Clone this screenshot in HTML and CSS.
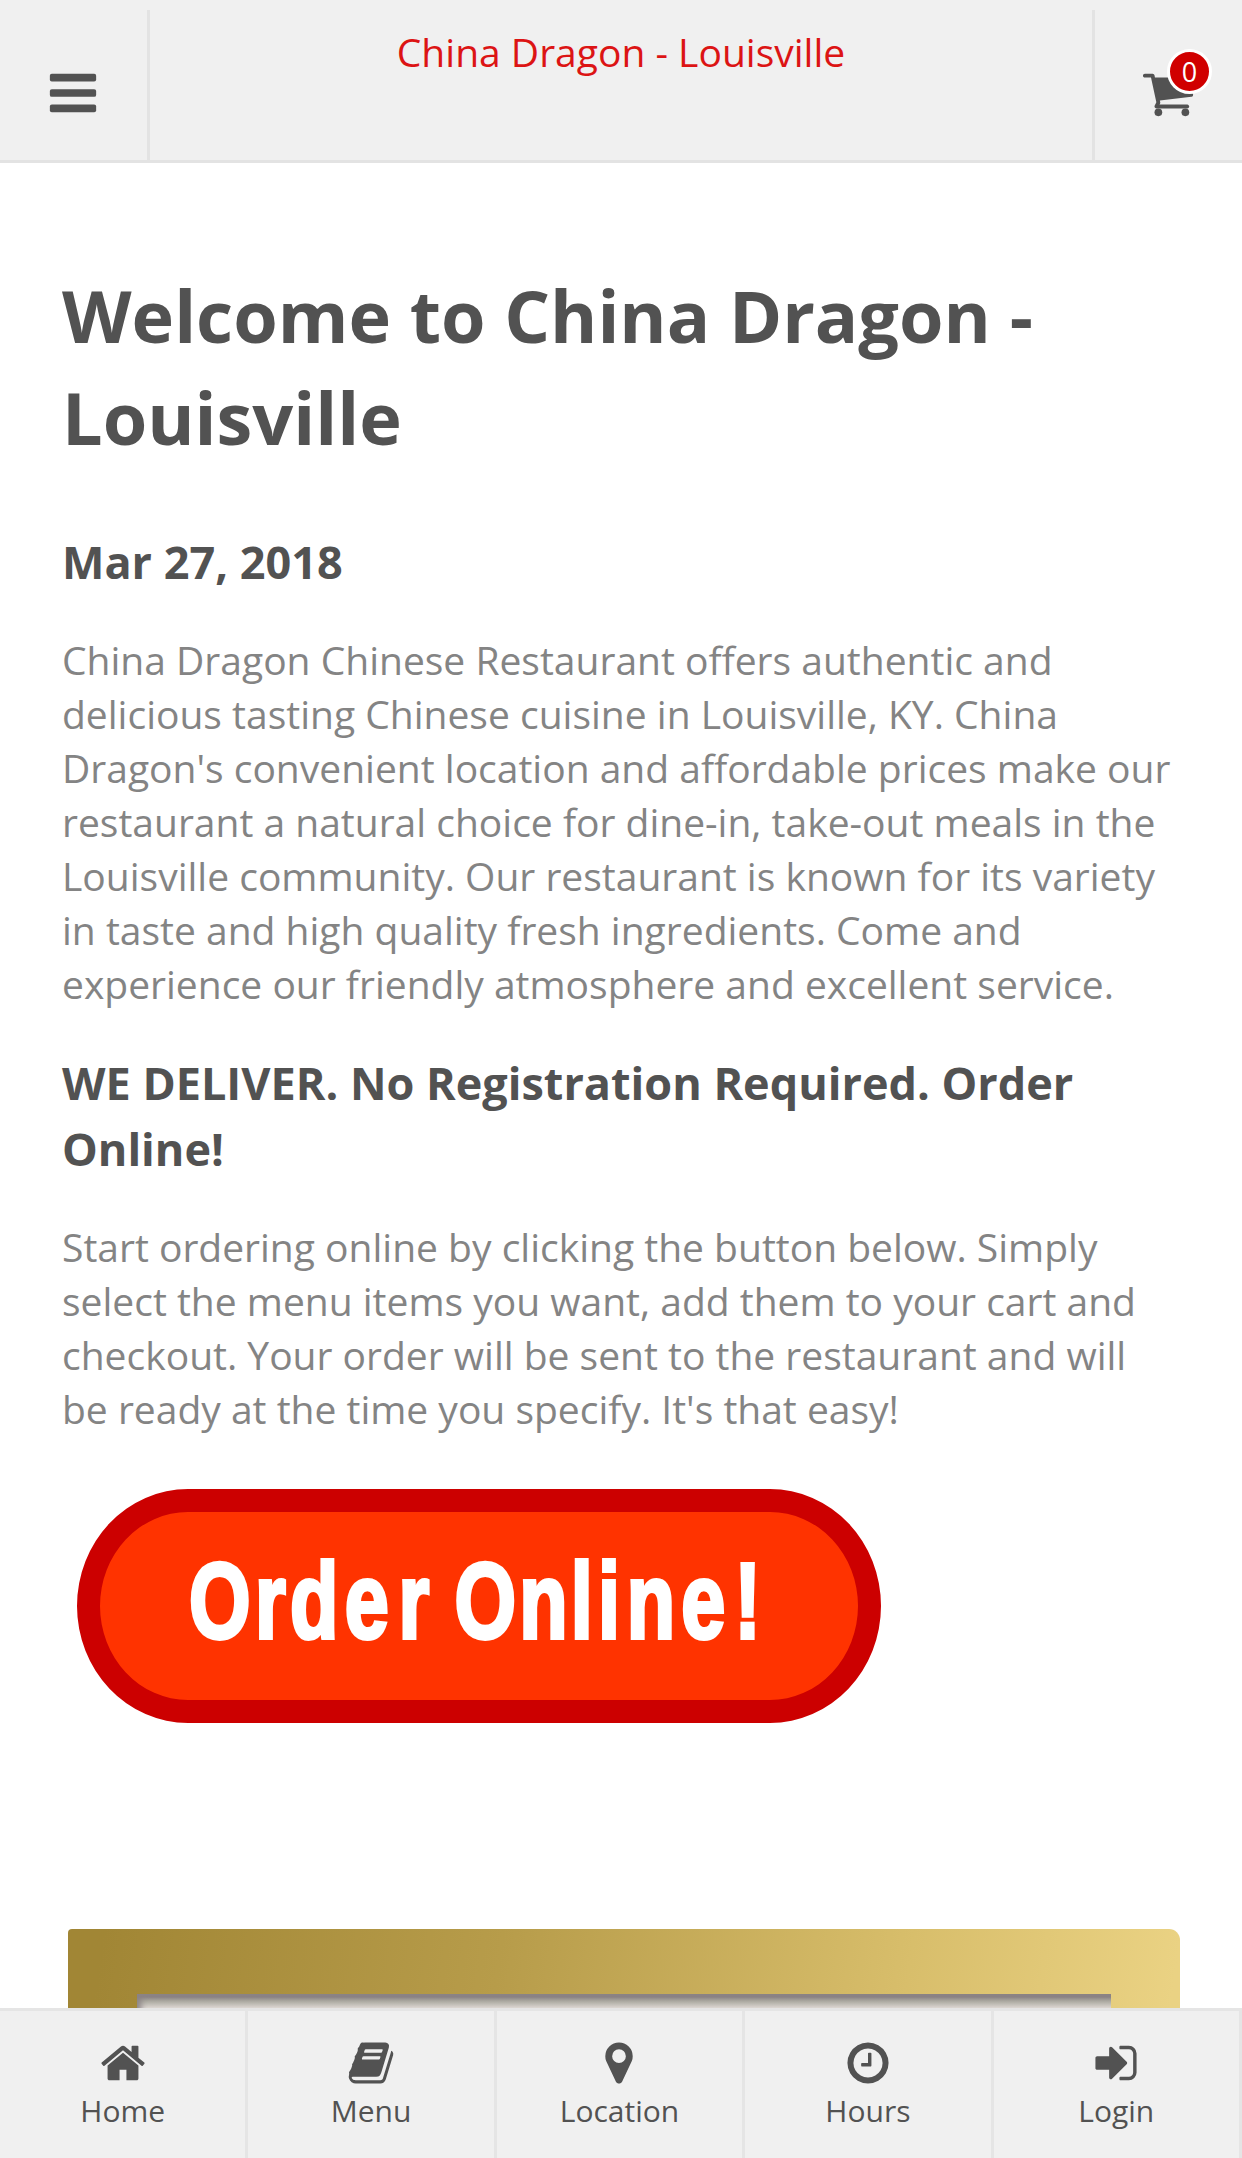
FILE: index.html
```html
<!DOCTYPE html>
<html lang="en">
<head>
<meta charset="utf-8">
<title>China Dragon - Louisville</title>
<link rel="stylesheet" href="styles.css">
</head>
<body>
<header class="topbar">
  <a class="topbar-button" href="#" aria-label="Open menu">
    <svg class="topbar-icon" viewBox="0 0 1792 1792"><rect x="128" y="256" width="1536" height="256" rx="64"/><rect x="128" y="768" width="1536" height="256" rx="64"/><rect x="128" y="1280" width="1536" height="256" rx="64"/></svg>
  </a>
  <div class="topbar-title">China Dragon - Louisville</div>
  <a class="topbar-button topbar-cart" href="#" aria-label="Cart">
    <svg class="topbar-icon" viewBox="0 0 1792 1792"><circle cx="576" cy="1536" r="128"/><circle cx="1472" cy="1536" r="128"/><path d="M1728 448v512q0 24-16.500 42.500t-40.500 21.500l-1044 122q13 60 13 70 0 16-24 64h920q26 0 45 19t19 45-19 45-45 19h-1024q-26 0-45-19t-19-45q0-11 8-31.500t16-36 21.500-40 15.500-29.500l-177-823h-204q-26 0-45-19t-19-45 19-45 45-19h256q16 0 28.500 6.500t19.500 15.500 13 24.500 8 26 5.500 29.500 4.500 26h1201q26 0 45 19t19 45z"/></svg>
    <span class="cart-count">0</span>
  </a>
</header>

<main class="content">
  <h1 class="headline">Welcome to China Dragon - Louisville</h1>
  <h3 class="subhead">Mar 27, 2018</h3>
  <p class="copy">China Dragon Chinese Restaurant offers authentic and delicious tasting Chinese cuisine in Louisville, KY. China Dragon's convenient location and affordable prices make our restaurant a natural choice for dine-in, take-out meals in the Louisville community. Our restaurant is known for its variety in taste and high quality fresh ingredients. Come and experience our friendly atmosphere and excellent service.</p>
  <h3 class="subhead">WE DELIVER. No Registration Required. Order Online!</h3>
  <p class="copy">Start ordering online by clicking the button below. Simply select the menu items you want, add them to your cart and checkout. Your order will be sent to the restaurant and will be ready at the time you specify. It's that easy!</p>
  <a class="order-button" href="#">
    <svg class="order-label" viewBox="0 0 804 234">
      <text transform="scale(.74 1)" x="151.500 240.400 288 362 434.600 480 510 597.600 667.400 704 743 816.500 888.500" y="149">Order Online!</text>
    </svg>
  </a>
  <div class="frame"><div class="frame-inner"></div></div>
</main>

<nav class="tabbar">
  <a class="tab" href="#">
    <svg class="tab-icon" viewBox="0 0 1792 1792"><path d="M1472 992v480q0 26-19 45t-45 19h-384v-384h-256v384h-384q-26 0-45-19t-19-45v-480q0-1 .5-3t.5-3l575-474 575 474q1 2 1 6zm223-69l-62 74q-8 9-21 11h-3q-13 0-21-7l-692-577-692 577q-12 8-24 7-13-2-21-11l-62-74q-8-10-7-23.500t11-21.500l719-599q32-26 76-26t76 26l244 204v-195q0-14 9-23t23-9h192q14 0 23 9t9 23v408l219 182q10 8 11 21.500t-7 23.500z"/></svg>
    <span class="tab-label">Home</span>
  </a>
  <a class="tab" href="#">
    <svg class="tab-icon" viewBox="0 0 1792 1792"><path d="M1703 478q40 57 18 129l-275 906q-19 64-76.500 107.500t-122.500 43.500h-923q-77 0-148.500-53.500t-99.500-131.500q-24-67-2-127 0-4 3-27t4-37q1-8-3-21.500t-3-19.500q2-11 8-21t16.500-23.500 16.500-23.500q23-38 45-91.500t30-91.500q3-10 .5-30t-.5-28q3-11 17-28t17-23q21-36 42-92t25-90q1-9-2.500-32t.5-28q4-13 22-30.500t22-22.500q19-26 42.500-84.500t27.500-96.500q1-8-3-25.500t-2-26.500q2-8 9-18t18-23 17-21q8-12 16.500-30.500t15-35 16-36 19.500-32 26.500-23.500 36-11.500 47.500 5.500l-1 3q38-9 51-9h761q74 0 114 56t18 130l-274 906q-36 119-71.500 153.500t-128.500 34.500h-869q-27 0-38 15-11 16-1 43 24 70 144 70h923q29 0 56-15.500t35-41.500l300-987q7-22 5-57 38 15 59 43zm-1064 2q-4 13 2 22.500t20 9.500h608q13 0 25.500-9.500t16.500-22.500l21-64q4-13-2-22.500t-20-9.500h-608q-13 0-25.500 9.500t-16.500 22.500zm-83 256q-4 13 2 22.500t20 9.500h608q13 0 25.500-9.500t16.500-22.500l21-64q4-13-2-22.500t-20-9.500h-608q-13 0-25.500 9.500t-16.500 22.500z"/></svg>
    <span class="tab-label">Menu</span>
  </a>
  <a class="tab" href="#">
    <svg class="tab-icon" viewBox="0 0 1792 1792"><path d="M1152 640q0-106-75-181t-181-75-181 75-75 181 75 181 181 75 181-75 75-181zm256 0q0 109-33 179l-364 774q-16 33-47.500 52t-67.500 19-67.500-19-46.500-52l-365-774q-33-70-33-179 0-212 150-362t362-150 362 150 150 362z"/></svg>
    <span class="tab-label">Location</span>
  </a>
  <a class="tab" href="#">
    <svg class="tab-icon" viewBox="0 0 1792 1792"><path d="M1024 544v448q0 14-9 23t-23 9h-320q-14 0-23-9t-9-23v-64q0-14 9-23t23-9h224v-352q0-14 9-23t23-9h64q14 0 23 9t9 23zm416 352q0-148-73-273t-198-198-273-73-273 73-198 198-73 273 73 273 198 198 273 73 273-73 198-198 73-273zm224 0q0 209-103 385.500t-279.500 279.500-385.500 103-385.500-103-279.500-279.500-103-385.500 103-385.500 279.500-279.500 385.500-103 385.500 103 279.500 279.500 103 385.500z"/></svg>
    <span class="tab-label">Hours</span>
  </a>
  <a class="tab" href="#">
    <svg class="tab-icon" viewBox="0 0 1792 1792"><path d="M1312 896q0 26-19 45l-544 544q-19 19-45 19t-45-19-19-45v-288h-448q-26 0-45-19t-19-45v-384q0-26 19-45t45-19h448v-288q0-26 19-45t45-19 45 19l544 544q19 19 19 45zm352-352v704q0 119-84.500 203.500t-203.500 84.500h-320q-13 0-22.500-9.500t-9.500-22.500q0-4-1-20t-.5-26.500 3-23.500 10-19.500 20.500-6.500h320q66 0 113-47t47-113v-704q0-66-47-113t-113-47h-312l-11.500-1-11.500-3-8-5.500-7-9-2-13.500q0-4-1-20t-.5-26.500 3-23.500 10-19.500 20.500-6.500h320q119 0 203.500 84.500t84.500 203.500z"/></svg>
    <span class="tab-label">Login</span>
  </a>
</nav>
</body>
</html>
```
FILE: styles.css
```css
* {
  box-sizing: border-box;
}

body {
  margin: 0;
  height: 2158px;
  display: flex;
  flex-direction: column;
  overflow: hidden;
  background: #fff;
  color: #525252;
  font-family: "Open Sans", sans-serif;
}

/* Header */
.topbar {
  flex: none;
  height: 163px;
  padding-top: 10px;
  display: flex;
  background: #f0f0f0;
  border-bottom: 3px solid #e3e3e3;
}

.topbar-button {
  position: relative;
  width: 150px;
  padding: 56px 0 0 46px;
  border-right: 3px solid #e3e3e3;
}

.topbar-cart {
  border-right: 0;
  border-left: 3px solid #e3e3e3;
}

.topbar-icon {
  display: block;
  width: 54px;
  height: 54px;
  fill: #525252;
}

.topbar-title {
  flex: 1;
  padding-top: 15px;
  color: #dc1414;
  font-size: 39px;
  line-height: 54px;
  text-align: center;
}

.cart-count {
  position: absolute;
  top: 39px;
  left: 72px;
  width: 45px;
  height: 45px;
  border: 3px solid #fff;
  border-radius: 50%;
  background: #d00000;
  color: #fff;
  font-size: 27px;
  line-height: 39px;
  text-align: center;
}

/* Page copy */
.content {
  flex: 1;
  min-height: 0;
  padding: 101px 62px 0;
  overflow: hidden;
}

.headline {
  margin: 0 0 60.5px;
  font-size: 72px;
  line-height: 102px;
}

.subhead {
  margin: 0;
  font-size: 45px;
  line-height: 66px;
}

.copy {
  margin: 38.5px 0;
  color: #848484;
  font-size: 39px;
  line-height: 54px;
}

.order-button {
  display: block;
  width: 804px;
  height: 234px;
  margin: 53px 0 206px 15px;
  border: 23px solid #c00;
  border-radius: 111px / 117px;
  background: #f30;
}

.order-label {
  display: block;
  width: 804px;
  height: 234px;
  margin: -23px;
  fill: #fff;
  stroke: #fff;
  stroke-width: 4px;
  font-family: "Liberation Sans", sans-serif;
  font-size: 107px;
  font-weight: 700;
}

/* Gilded picture frame */
.frame {
  width: 1112px;
  height: 700px;
  margin-left: 6px;
  padding: 65px 69px;
  border-radius: 4px 11px 0 0;
  background: linear-gradient(98deg, #a18635 3%, #b79c4a 36%, #d8be6b 70%, #ead283 92%);
}

.frame-inner {
  height: 500px;
  background: linear-gradient(#8b8385 0, #8b8385 3px, #aaa89f 7px, #ddd7d2 14px);
  box-shadow: inset 7px 0 6px -3px #8b8385;
}

/* Bottom navigation */
.tabbar {
  flex: none;
  height: 150px;
  display: grid;
  grid-template-columns: repeat(5, 1fr);
  background: #f0f0f0;
  border-top: 3px solid #e5e5e5;
}

.tab {
  display: flex;
  flex-direction: column;
  align-items: center;
  padding-top: 28px;
  border-right: 3px solid #e5e5e5;
  color: #525252;
  text-decoration: none;
}

.tab-icon {
  width: 48px;
  height: 48px;
  fill: currentColor;
}

.tab-label {
  margin-top: 3px;
  font-size: 30px;
  line-height: 42px;
}
```
